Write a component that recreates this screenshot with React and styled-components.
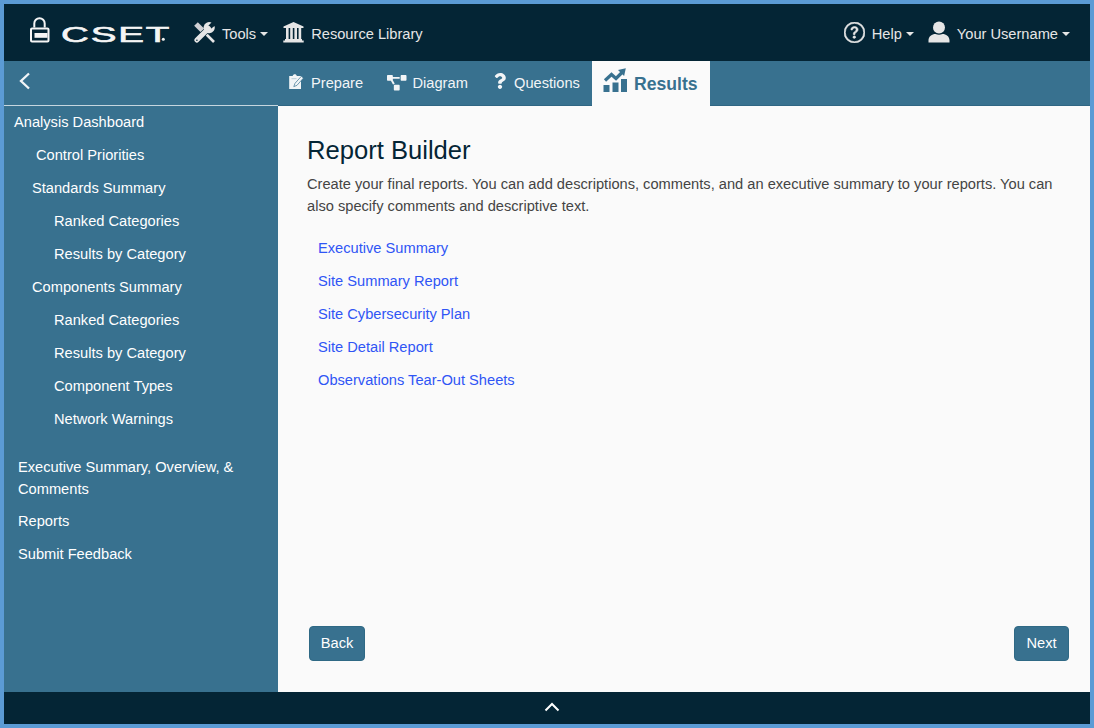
import React from "react";
import styled, { createGlobalStyle } from "styled-components";
import { BsQuestionCircle } from "react-icons/bs";
import { FaProjectDiagram, FaQuestion } from "react-icons/fa";

const Global = createGlobalStyle`
  * { box-sizing: border-box; }
  body { margin: 0; font-family: "Liberation Sans", Arial, sans-serif; font-size: 14.65px; }
`;

const Frame = styled.div`
  height: 728px;
  border: 4px solid #5b9bd5;
  display: flex;
  flex-direction: column;
  overflow: hidden;
  background: #fafafa;
`;

const Header = styled.header`
  height: 57px;
  flex: none;
  background: #042535;
  color: #e6e6e6;
  display: flex;
  align-items: center;
  padding: 0 20px 0 25px;
`;

const Brand = styled.div`
  display: flex;
  width: 165px;
  padding-bottom: 2px;
`;

const MenuItem = styled.div`
  display: flex;
  align-items: center;
  white-space: nowrap;
  height: 24px;
  margin-left: ${(p) => p.$gap || 0}px;
  svg { margin: 0 7px 1px 0; flex: none; }
  span { padding-top: 2px; }
`;

const Caret = styled.i`
  border: 4px solid transparent;
  border-top-color: currentColor;
  border-bottom: 0;
  margin: 2px 0 0 4px;
`;

const Spacer = styled.div`
  flex: 1;
`;

const TabBar = styled.nav`
  height: 45px;
  flex: none;
  background: #38718f;
  border-bottom: 1px solid #2f6683;
  color: #f2f5f7;
  display: flex;
`;

const Collapse = styled.button`
  width: 274px;
  border: 0;
  padding: 0 0 4px 15px;
  background: none;
  color: inherit;
  display: flex;
  align-items: center;
`;

const Tab = styled.div`
  display: flex;
  align-items: center;
  width: ${(p) => p.$width}px;
  padding-left: 11px;
  white-space: nowrap;
  svg { flex: none; margin: 0 ${(p) => p.$iconGap}px ${(p) => p.$lift || 0}px 0; }
`;

const ActiveTab = styled(Tab)`
  background: #fafafa;
  color: #38718f;
  font-weight: bold;
  font-size: 17.6px;
  height: 45px;
  span { padding-top: 2px; }
`;

const Body = styled.div`
  flex: 1;
  display: flex;
  min-height: 0;
`;

const Sidebar = styled.aside`
  width: 274px;
  flex: none;
  margin-top: -1px;
  background: #38718f;
  border-top: 1px solid #c6d6df;
  color: #fff;
`;

const NavItem = styled.div`
  padding: 5.46px 36px 5.46px ${(p) => p.$indent}px;
  line-height: 22px;
  margin-top: ${(p) => p.$top || 0}px;
`;

const Main = styled.main`
  flex: 1;
  display: flex;
  flex-direction: column;
  padding: 28px 21px 31px 29px;
`;

const Title = styled.h1`
  margin: 0;
  font-size: 25.6px;
  line-height: 33px;
  font-weight: normal;
  color: #042535;
`;

const Intro = styled.p`
  margin: 6px 0 20px;
  line-height: 22px;
  color: #444;
`;

const ReportLink = styled.a`
  display: block;
  padding-left: 11px;
  height: 32.9px;
  line-height: 22px;
  color: #2f55f5;
`;

const Actions = styled.div`
  margin-top: auto;
  padding-left: 2px;
  display: flex;
  justify-content: space-between;
`;

const Button = styled.button`
  height: 35px;
  width: ${(p) => p.$width}px;
  border: 1px solid #2f6985;
  border-radius: 4px;
  background: #38718f;
  color: #fff;
  font: inherit;
  padding: 0 0 2px;
`;

const Footer = styled.footer`
  height: 32px;
  flex: none;
  background: #042535;
  display: flex;
  justify-content: center;
  align-items: center;
  padding: 0 0 2px 9px;
`;

const Wordmark = styled.text`
  font-family: "Liberation Sans", Arial, sans-serif;
  font-size: 21.5px;
  letter-spacing: 1px;
  fill: #f5f5f5;
  stroke: #f5f5f5;
  stroke-width: 0.6px;
`;

const LockLogo = () => (
  <svg width="144" height="36" viewBox="0 -4 144 36" fill="none">
    <path d="M5.300 9.500V5.500a5.200 5.200 0 0 1 10.400 0V9.500" stroke="#f5f5f5" strokeWidth="2" />
    <rect x="2" y="10.500" width="17.500" height="13" rx="1" stroke="#f5f5f5" strokeWidth="2" />
    <rect x="5.500" y="15" width="13" height="4.800" fill="#f5f5f5" />
    <Wordmark x="32" y="24" textLength="110" lengthAdjust="spacingAndGlyphs">CSET</Wordmark>
    <circle cx="134.300" cy="21.300" r="1.500" fill="#f5f5f5" />
  </svg>
);

const ToolsIcon = () => (
  <svg width="21" height="21" viewBox="0 0 21 21" fill="none">
    <path d="M2 2 9 9" stroke="#d0d0d4" strokeWidth="5.200" />
    <path d="M8 8 20 20" stroke="#e6e6e6" strokeWidth="2.600" />
    <path d="M2.900 18 13.500 7.500" stroke="#042535" strokeWidth="6.200" />
    <path d="M2.900 18 14.500 6.500" stroke="#e6e6e6" strokeWidth="5" strokeLinecap="round" />
    <path d="M17.500.6a5.600 5.600 0 1 0 3 3.400L17.300 6.600l-2.500-.6-.3-2.500z" fill="#e6e6e6" />
    <circle cx="2.900" cy="18.200" r=".8" fill="#042535" />
  </svg>
);

const LibraryIcon = () => (
  <svg width="21" height="21" viewBox="0 0 21 21" fill="currentColor">
    <path d="M10.500 0 20.500 4.600V6H.5V4.600zM2 17h17v1.500H2zM.3 18.500h20.400v2H.3z" />
    <path d="M3 6h2.600v11H3zM7.200 6h2.600v11H7.200zM11.400 6H14v11h-2.600zM15.600 6h2.600v11h-2.600z" />
  </svg>
);

const UserIcon = () => (
  <svg width="22" height="22" viewBox="0 0 22 22" fill="currentColor">
    <circle cx="11" cy="6.600" r="6" />
    <path d="M.5 21.500v-2.300c0-4 3.500-6.300 7-6.300 2.200 1.100 4.800 1.100 7 0 3.500 0 7 2.300 7 6.300v2.300z" />
  </svg>
);

const PrepareIcon = () => (
  <svg width="15" height="16" viewBox="0 0 15 16">
    <path d="M.2 2h3.500C4-.2 7.500-.2 7.800 2H12v13H.2z" fill="#f2f5f7" />
    <path d="M12.600 2 6 9.300 4.800 12.600l3.100-1.200 6.400-7.200z" fill="#f2f5f7" stroke="#38718f" strokeWidth=".7" />
    <path d="M2.500 4.700h5" stroke="#a9c1ce" strokeWidth=".8" />
  </svg>
);

const ChartIcon = () => (
  <svg width="25" height="25" viewBox="0 0 25 25" fill="currentColor">
    <path d="M.5 17h6v7h-6zM9.500 14.500h6V24h-6zM18 11h6v13h-6z" />
    <path d="m2 12.500 6.500-6 4.500 4L19.500 4" fill="none" stroke="currentColor" strokeWidth="3.200" />
    <path d="m15 2 7.800-1.700L21.100 8z" />
  </svg>
);

const navItems = [
  ["Analysis Dashboard", 10],
  ["Control Priorities", 32],
  ["Standards Summary", 28],
  ["Ranked Categories", 50],
  ["Results by Category", 50],
  ["Components Summary", 28],
  ["Ranked Categories", 50],
  ["Results by Category", 50],
  ["Component Types", 50],
  ["Network Warnings", 50],
  ["Executive Summary, Overview, & Comments", 14, 15],
  ["Reports", 14],
  ["Submit Feedback", 14],
];

const reports = [
  "Executive Summary",
  "Site Summary Report",
  "Site Cybersecurity Plan",
  "Site Detail Report",
  "Observations Tear-Out Sheets",
];

export default function App() {
  return (
    <Frame>
      <Global />
      <Header>
        <Brand><LockLogo /></Brand>
        <MenuItem><ToolsIcon /><span>Tools</span><Caret /></MenuItem>
        <MenuItem $gap={15}><LibraryIcon /><span>Resource Library</span></MenuItem>
        <Spacer />
        <MenuItem><BsQuestionCircle size={21} stroke="currentColor" strokeWidth={0.5} /><span>Help</span><Caret /></MenuItem>
        <MenuItem $gap={14}><UserIcon /><span>Your Username</span><Caret /></MenuItem>
      </Header>
      <TabBar>
        <Collapse aria-label="Collapse menu">
          <svg width="12" height="18" viewBox="0 0 12 18" fill="none">
            <path d="M10 1.500 2 9l8 7.500" stroke="currentColor" strokeWidth="2.300" />
          </svg>
        </Collapse>
        <Tab $width={98} $iconGap={7} $lift={2}><PrepareIcon /><span>Prepare</span></Tab>
        <Tab $width={105} $iconGap={6} $lift={1}><FaProjectDiagram size={19.500} /><span>Diagram</span></Tab>
        <Tab $width={111} $iconGap={6} $lift={4}><FaQuestion size={16} /><span>Questions</span></Tab>
        <ActiveTab $width={118} $iconGap={6} $lift={6}><ChartIcon /><span>Results</span></ActiveTab>
      </TabBar>
      <Body>
        <Sidebar>
          {navItems.map(([label, indent, top], i) => (
            <NavItem key={i} $indent={indent} $top={top}>{label}</NavItem>
          ))}
        </Sidebar>
        <Main>
          <Title>Report Builder</Title>
          <Intro>
            Create your final reports. You can add descriptions, comments, and an executive summary to your reports. You can also specify comments and descriptive text.
          </Intro>
          {reports.map((name) => <ReportLink key={name}>{name}</ReportLink>)}
          <Actions>
            <Button $width={56}>Back</Button>
            <Button $width={55}>Next</Button>
          </Actions>
        </Main>
      </Body>
      <Footer>
        <svg width="16" height="10" viewBox="0 0 16 10" fill="none">
          <path d="m1.500 8.500 6.500-6.500 6.500 6.500" stroke="#fff" strokeWidth="2" />
        </svg>
      </Footer>
    </Frame>
  );
}
